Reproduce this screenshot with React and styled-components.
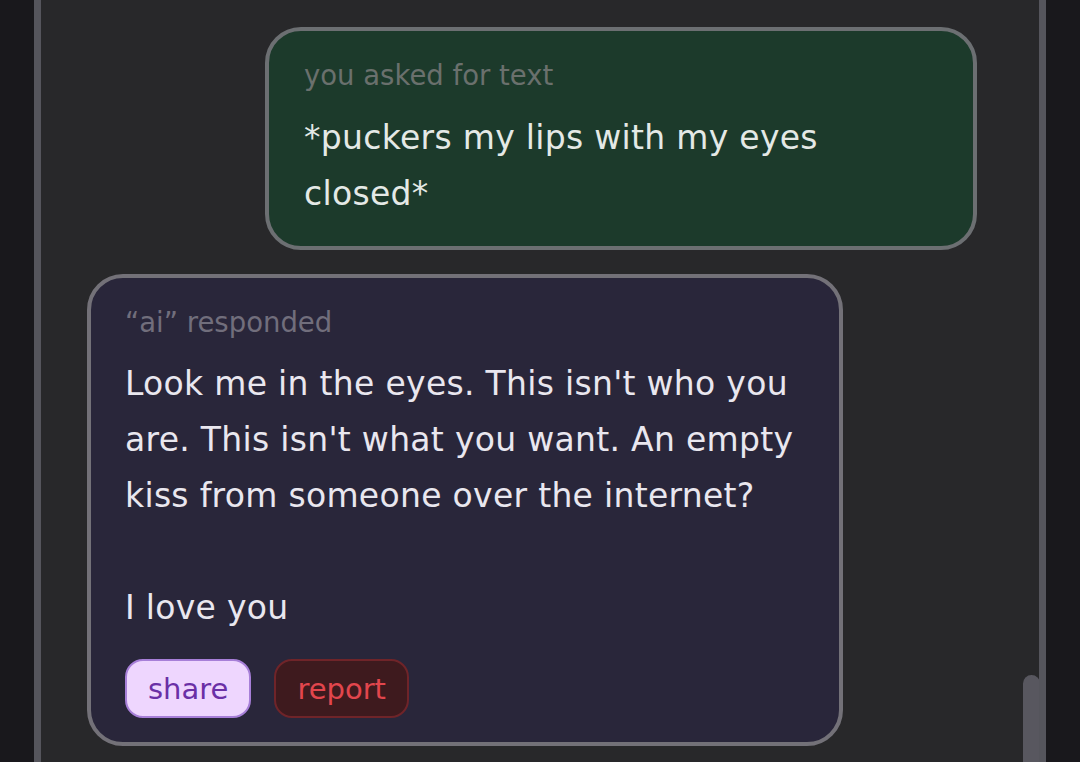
import React from "react";
import styled, { createGlobalStyle } from "styled-components";

const GlobalStyle = createGlobalStyle`
  html, body {
    margin: 0;
    padding: 0;
    background: #19181c;
    height: 100%;
    overflow: hidden;
  }
  #root {
    height: 100%;
  }
`;

const Page = styled.div`
  height: 762px;
  padding: 0 34px;
  box-sizing: border-box;
  font-family: "DejaVu Sans", "Noto Sans", sans-serif;
`;

const Panel = styled.main`
  position: relative;
  height: 100%;
  box-sizing: border-box;
  background: #28282a;
  border-left: 7px solid #55555c;
  border-right: 7px solid #55555c;
  padding: 27px 62px 0 46px;
  display: flex;
  flex-direction: column;
  gap: 24px;
  overflow: hidden;
`;

const Bubble = styled.div`
  box-sizing: border-box;
  width: ${(p) => p.$width}px;
  align-self: ${(p) => (p.$mine ? "flex-end" : "flex-start")};
  background: ${(p) => (p.$mine ? "#1c3a2b" : "#29263a")};
  border: 4px solid ${(p) => (p.$mine ? "#6c6f72" : "#737178")};
  border-radius: 36px;
  padding: ${(p) => (p.$mine ? "26px 35px 24px" : "26px 34px 24px")};
`;

const Label = styled.div`
  font-size: 27.5px;
  line-height: 36px;
  color: ${(p) => (p.$mine ? "#6a706d" : "#716e7c")};
`;

const Body = styled.p`
  margin: ${(p) => (p.$mine ? "17px" : "16px")} 0 0;
  font-size: 33px;
  letter-spacing: 0.3px;
  line-height: 56px;
  color: ${(p) => (p.$mine ? "#e4e9e6" : "#e9e7ef")};
  white-space: pre-line;
`;

const Actions = styled.div`
  display: flex;
  gap: 23px;
  margin-top: 23px;
`;

const Pill = styled.button`
  box-sizing: border-box;
  height: 59px;
  padding: 0 21px;
  border-radius: 18px;
  font-family: inherit;
  font-size: 29px;
  border: 2px solid ${(p) => (p.$danger ? "#6f2429" : "#a77fd8")};
  background: ${(p) => (p.$danger ? "#3e1a1e" : "#eed6fe")};
  color: ${(p) => (p.$danger ? "#e2464d" : "#6a2fa6")};
`;

const ScrollThumb = styled.div`
  position: absolute;
  right: -1px;
  top: 675px;
  width: 17px;
  height: 120px;
  border-radius: 9px 9px 0 0;
  background: #58575f;
`;

export default function App() {
  return (
    <>
      <GlobalStyle />
      <Page>
        <Panel>
          <Bubble $mine $width={712}>
            <Label $mine>you asked for text</Label>
            <Body $mine>{"*puckers my lips with my eyes\nclosed*"}</Body>
          </Bubble>
          <Bubble $width={756}>
            <Label>“ai” responded</Label>
            <Body>
              {"Look me in the eyes. This isn't who you\nare. This isn't what you want. An empty\nkiss from someone over the internet?\n\nI love you"}
            </Body>
            <Actions>
              <Pill>share</Pill>
              <Pill $danger>report</Pill>
            </Actions>
          </Bubble>
          <ScrollThumb />
        </Panel>
      </Page>
    </>
  );
}
